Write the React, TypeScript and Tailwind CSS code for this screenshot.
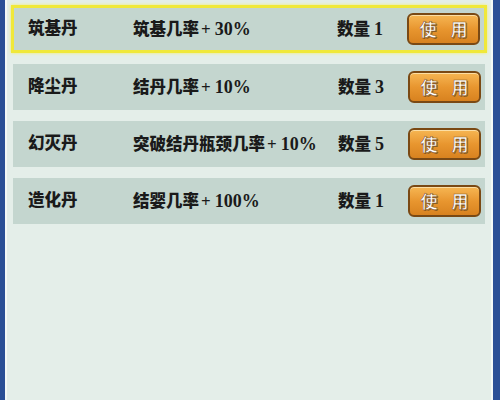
const items = [
  { name: "筑基丹", desc: "筑基几率", rate: "30%", qty: 1, active: true },
  { name: "降尘丹", desc: "结丹几率", rate: "10%", qty: 3, active: false },
  { name: "幻灭丹", desc: "突破结丹瓶颈几率", rate: "10%", qty: 5, active: false },
  { name: "造化丹", desc: "结婴几率", rate: "100%", qty: 1, active: false },
];

const font = { fontFamily: '"Liberation Serif", "Noto Sans CJK SC", serif' };
const btnText = {
  fontFamily: '"Noto Sans CJK SC", sans-serif',
  WebkitTextStroke: "0.6px #8a5a22",
  textShadow: "1px 1px 0 #8a5a22",
};

function UseButton() {
  return (
    <button className="flex h-[32px] w-[73px] items-center justify-center gap-[14px] rounded-[6px] border-2 border-[#7a4914] bg-gradient-to-b from-[#f6b652] via-[#e8962f] to-[#d8821f] shadow-[inset_0_1px_0_rgba(255,240,200,0.7)]">
      <span className="text-[17px] font-bold text-white" style={btnText}>
        使
      </span>
      <span className="text-[17px] font-bold text-white" style={btnText}>
        用
      </span>
    </button>
  );
}

export default function App() {
  return (
    <div className="flex h-[400px] w-[500px] bg-[#2b4f96] pl-[5px] pr-[7px]">
      <div className="flex flex-1 flex-col gap-[11px] border-x-2 border-[#f4f8f6] bg-[#e4eee9] px-[4px] pt-[5px]">
        {items.map((item) => (
          <div
            key={item.name}
            className={
              item.active
                ? "flex h-[48px] items-center border-[3px] border-[#f0e83a] bg-[#c4d6cf] pl-[14px] pr-[4px] shadow-[0_0_3px_#f5ee6a]"
                : "mx-[2px] flex h-[46px] items-center bg-[#c4d6cf] pl-[15px] pr-[4px]"
            }
            style={font}
          >
            <span className="w-[105px] text-[16.5px] font-black text-[#1a1a1a]">{item.name}</span>
            <span className="flex flex-1 items-baseline text-[16.5px] font-black text-[#1a1a1a]">
              {item.desc}
              <span className="ml-[2px] mr-[4px] text-[17px] font-bold">+</span>
              <span className="text-[18px] font-bold">{item.rate}</span>
            </span>
            <span className="mr-[24px] text-[16.5px] font-black text-[#1a1a1a]">
              数量 <span className="text-[18px] font-bold">{item.qty}</span>
            </span>
            <UseButton />
          </div>
        ))}
      </div>
    </div>
  );
}
